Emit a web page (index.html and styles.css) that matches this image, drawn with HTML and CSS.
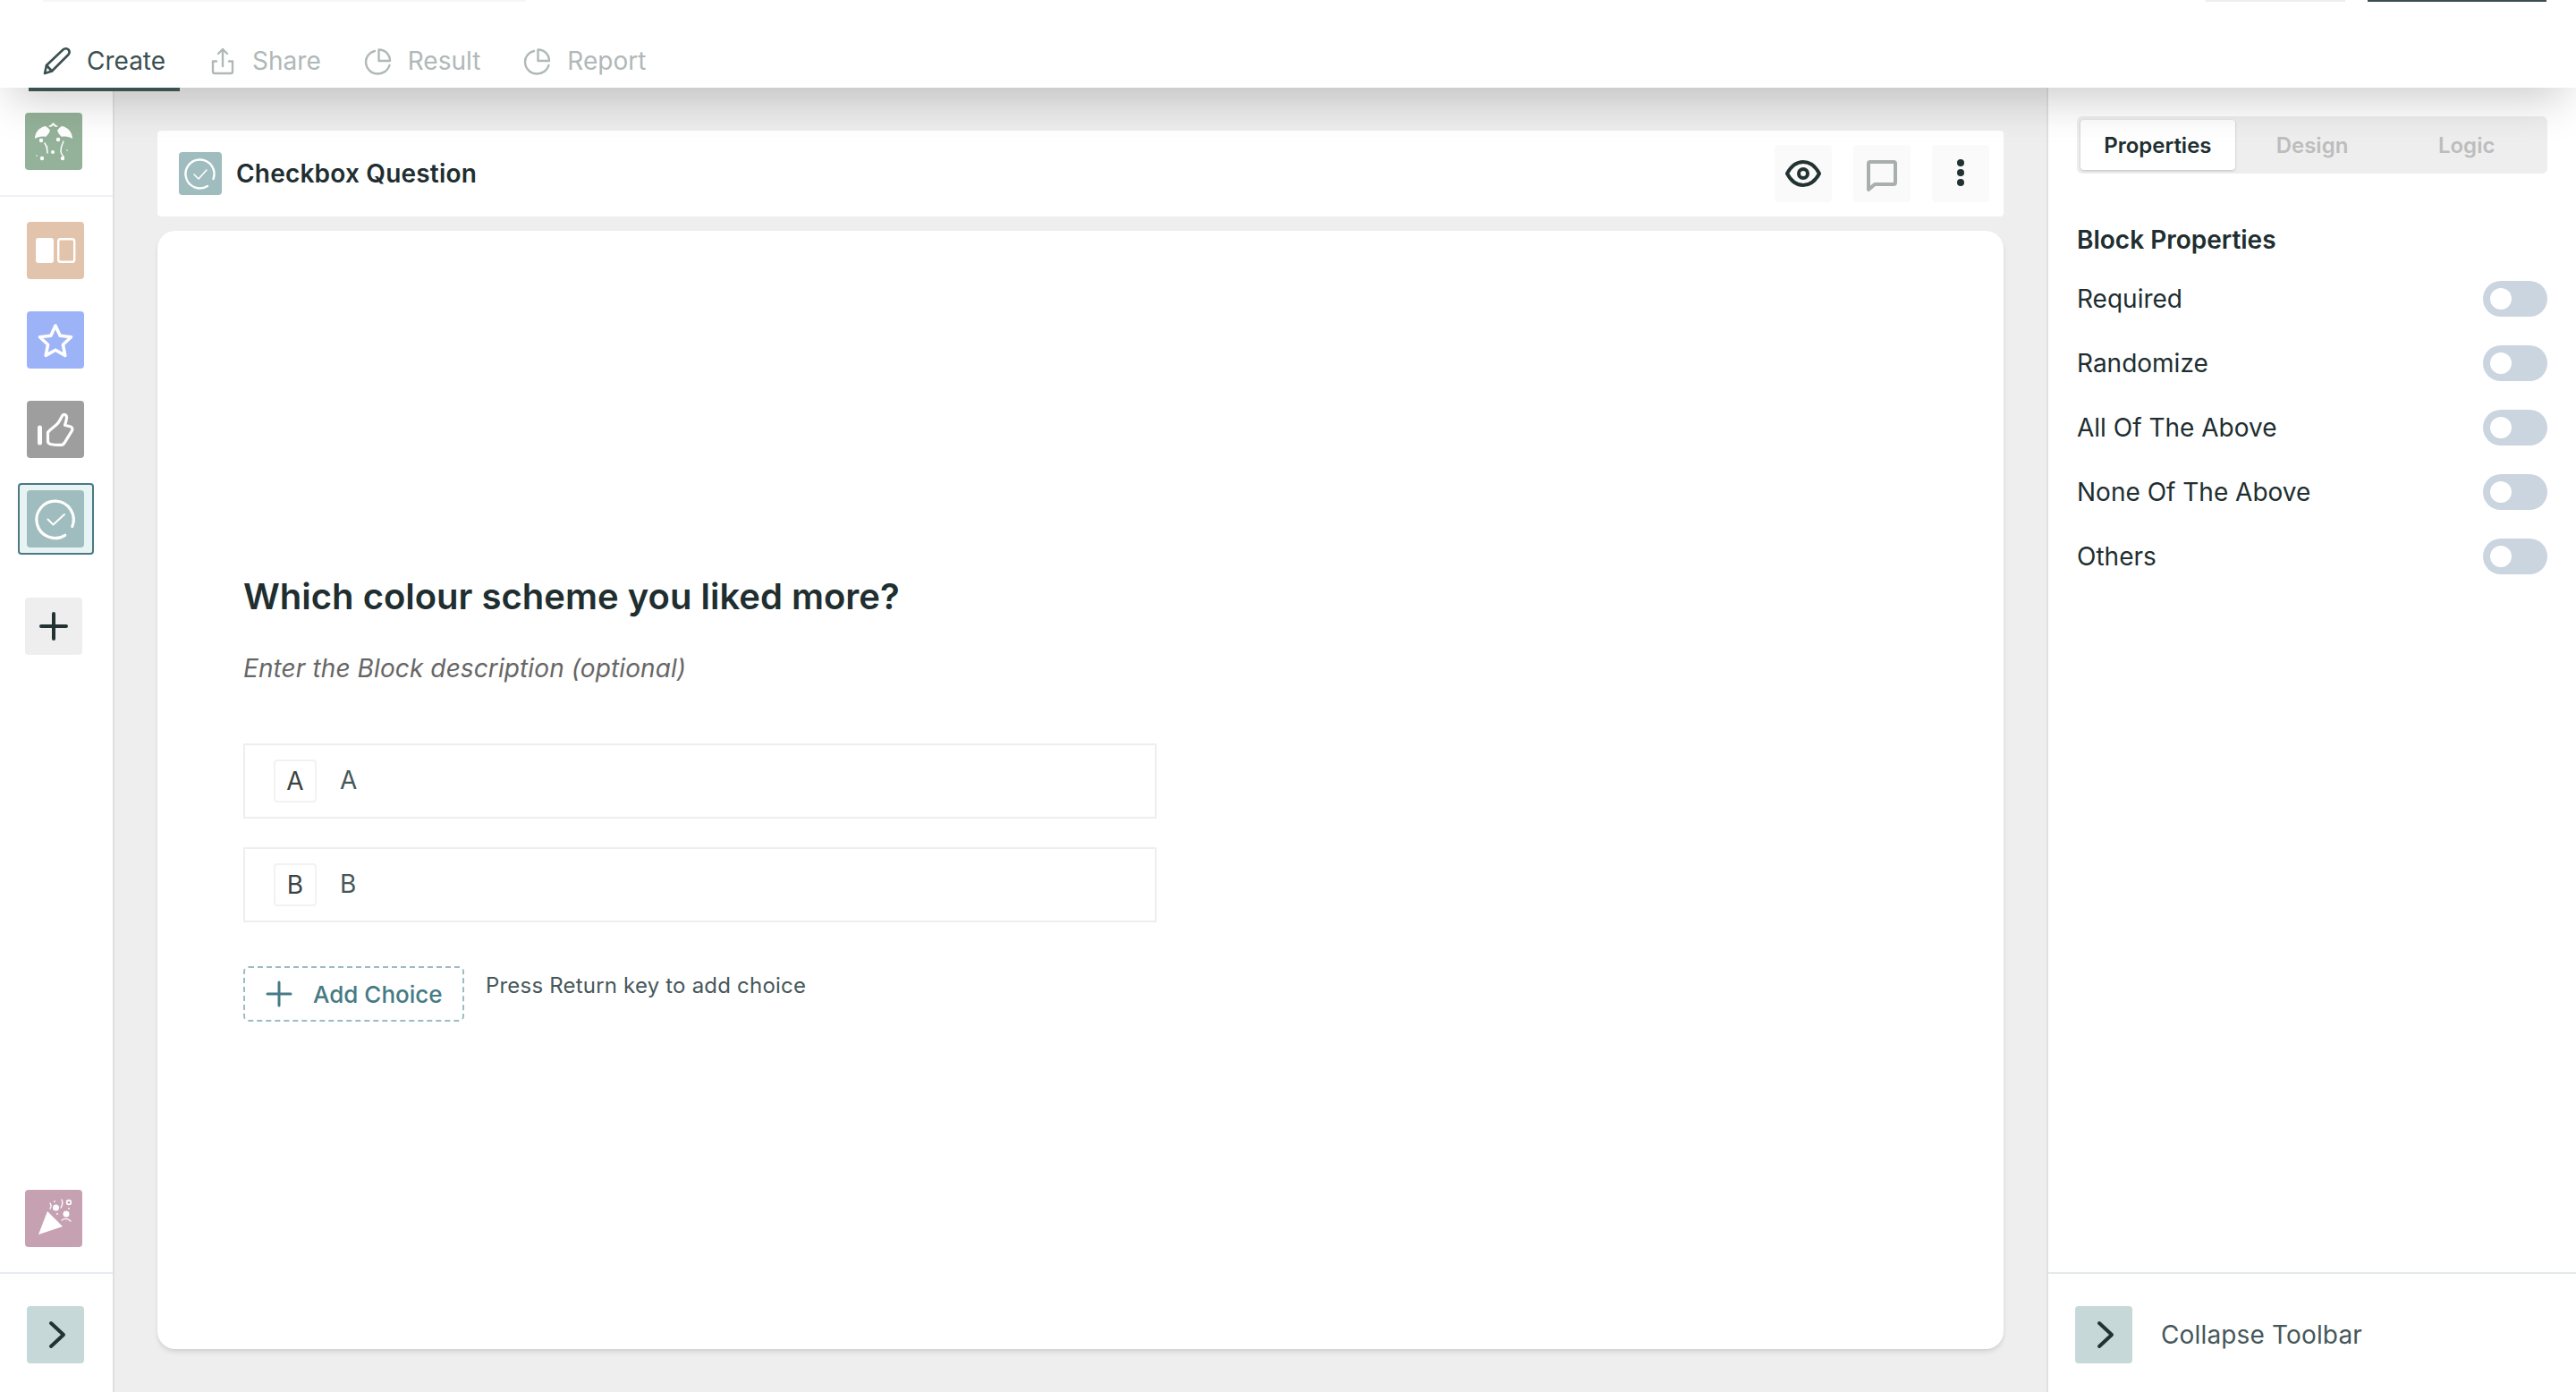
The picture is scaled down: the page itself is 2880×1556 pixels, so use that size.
FILE: index.html
```html
<!DOCTYPE html>
<html lang="en">
<head>
<meta charset="utf-8">
<title>Checkbox Question</title>
<link rel="stylesheet" href="styles.css">
</head>
<body>
<div class="app">
  <header class="topbar">
    <div class="topbar-clipped">
      <span class="clip clip-left"></span>
      <span class="clip-spacer"></span>
      <span class="clip clip-grey"></span>
      <span class="clip clip-dark"></span>
    </div>
    <nav class="nav">
      <a class="nav-tab nav-tab-active">
        <svg class="nav-icon" viewBox="0 0 32 32" fill="none" stroke="currentColor" stroke-width="2.600" stroke-linejoin="round" stroke-linecap="round"><path d="M2 30l2-9L22.500 3.500c2-1.800 4.500-1.500 6 0s1.500 3.500 0 5.500L10 27.500z"/><path d="M4 21l6 6.500"/></svg>
        <span>Create</span>
      </a>
      <a class="nav-tab">
        <svg class="nav-icon" viewBox="0 0 32 32" fill="none" stroke="currentColor" stroke-width="2.400" stroke-linecap="round" stroke-linejoin="round"><path d="M9 16.500H5V28a2 2 0 0 0 2 2h18a2 2 0 0 0 2-2V16.500h-4"/><path d="M16 22V3M11 8l5-5 5 5"/></svg>
        <span>Share</span>
      </a>
      <a class="nav-tab">
        <svg class="nav-icon" viewBox="0 0 32 32" fill="none" stroke="currentColor" stroke-width="2.400" stroke-linecap="round" stroke-linejoin="round"><path d="M12 5C6 6.500 2 11.500 2 17c0 7.500 6 13.500 13.500 13.500 6.500 0 11.500-4 13-9.500"/><path d="M16.500 3.500c7 0 12.500 5.500 12.500 12.500H16.500z"/></svg>
        <span>Result</span>
      </a>
      <a class="nav-tab">
        <svg class="nav-icon" viewBox="0 0 32 32" fill="none" stroke="currentColor" stroke-width="2.400" stroke-linecap="round" stroke-linejoin="round"><path d="M12 5C6 6.500 2 11.500 2 17c0 7.500 6 13.500 13.500 13.500 6.500 0 11.500-4 13-9.500"/><path d="M16.500 3.500c7 0 12.500 5.500 12.500 12.500H16.500z"/></svg>
        <span>Report</span>
      </a>
    </nav>
  </header>

  <div class="workspace">
    <aside class="sidebar">
      <div class="sidebar-logo">
        <div class="tile tile-logo tile-wide">
          <svg viewBox="0 0 64 64" fill="#fff"><path d="M26 15q3-1 5.500-4 2.500 3 5.500 4l-2 1q-2 0-3.500-2-1.500 2-3.500 2z"/><path d="M11 29c0-7 5-13 12-14 2 1 4 3 5 5-1 3-3 5-5 7-4-1-9 0-12 2z"/><path d="M53 29c0-7-5-13-12-14-2 1-4 3-5 5 1 3 3 5 5 7 4-1 9 0 12 2z"/><circle cx="18" cy="31" r="2.200"/><circle cx="37" cy="30" r="2.200"/><circle cx="31" cy="44" r="2"/><circle cx="19" cy="51" r="2.200"/><circle cx="42" cy="51" r="2.200"/><circle cx="13" cy="48" r=".8"/><circle cx="47" cy="42" r=".8"/><circle cx="25" cy="38" r=".7"/><path d="M22 34c2 3 3 7 3 11M43 32c-2 4-3 8-3 11 0 2 1 4 3 6" fill="none" stroke="#fff" stroke-width="1.500" stroke-linecap="round"/></svg>
        </div>
      </div>
      <div class="sidebar-list">
        <div class="tile tile-form">
          <svg viewBox="0 0 64 64"><rect x="10" y="18" width="20" height="28" rx="3" fill="#fff"/><rect x="35.200" y="19.200" width="18" height="25.600" rx="2.500" fill="none" stroke="#fff" stroke-width="2.400"/></svg>
        </div>
        <div class="tile tile-star">
          <svg viewBox="0 0 64 64"><path d="M32 16l5.200 11.300 12.300 1.500-9.100 8.400 2.400 12.200L32 43.300l-10.800 6.100 2.400-12.200-9.100-8.400 12.300-1.500z" fill="none" stroke="#fff" stroke-width="3.600" stroke-linejoin="round"/></svg>
        </div>
        <div class="tile tile-thumb">
          <svg viewBox="0 0 64 64" fill="none" stroke="#fff" stroke-linecap="round" stroke-linejoin="round"><path d="M14.500 30v17" stroke-width="5"/><path d="M23.500 35v10c0 2 1 3 3 3.500 4 .8 8 1 12 .8 2 0 3-1 4-3l8-13c1-2 0-4-2-4.500l-6-1.500c1-3 2-6 2-9 0-2-2-3.500-4-2.500-1.500 1-2 3-3 5-1.500 3-3 5-5.500 7-3 2.500-6 4-8.500 7.700z" stroke-width="3.200"/></svg>
        </div>
        <div class="tile-selected">
          <div class="tile tile-check">
            <svg viewBox="0 0 64 64" fill="none" stroke="#fff" stroke-linecap="round" stroke-linejoin="round"><path d="M42.700 50.300A20.700 20.700 0 1 1 50.800 40.500" stroke-width="3.200"/><path d="M23.500 32.500l6 6L42 27" stroke-width="2"/></svg>
          </div>
        </div>
        <div class="tile tile-add tile-wide">
          <svg viewBox="0 0 64 64" fill="none" stroke="#233233" stroke-width="4" stroke-linecap="round"><path d="M32 18v28M18 32h28"/></svg>
        </div>
        <div class="tile tile-party tile-wide tile-end">
          <svg viewBox="0 0 64 64" fill="#fff"><path d="M15 50l10-26 17 17z"/><circle cx="34.500" cy="20" r="3.500"/><circle cx="46" cy="27" r="3.500"/><circle cx="49" cy="14" r="2.400" fill="none" stroke="#fff" stroke-width="1.600"/><circle cx="33" cy="13" r=".9"/><circle cx="36" cy="27" r=".9"/><circle cx="49" cy="21" r=".9"/><path d="M28 15c1.500 2 1.500 4 0 6M41 11c1.500 3 1 6-1 9M41 34c3-2 7-2 10 1" fill="none" stroke="#fff" stroke-width="1.300" stroke-linecap="round"/></svg>
        </div>
      </div>
      <div class="sidebar-footer">
        <div class="tile tile-toggle">
          <svg viewBox="0 0 64 64" fill="none" stroke="#233233" stroke-width="4" stroke-linecap="round" stroke-linejoin="round"><path d="M27 19l14 13-14 13"/></svg>
        </div>
      </div>
    </aside>

    <main class="main">
      <div class="block-header">
        <div class="block-title">
          <span class="block-badge">
            <svg viewBox="0 0 48 64" fill="none" stroke="#fff" stroke-linecap="round" stroke-linejoin="round"><path d="M32 46A16 16 0 1 1 38.500 38" stroke-width="2.400"/><path d="M17 33l5 5 9-10" stroke-width="1.600"/></svg>
          </span>
          <h1>Checkbox Question</h1>
        </div>
        <div class="block-actions">
          <button class="action">
            <svg viewBox="0 0 64 64" fill="none" stroke="#233233" stroke-width="4" stroke-linejoin="round"><path d="M14 32c4.500-8.500 11-13 18-13s13.500 4.500 18 13c-4.500 8.500-11 13-18 13s-13.500-4.500-18-13z"/><circle cx="32" cy="32" r="5"/></svg>
          </button>
          <button class="action">
            <svg viewBox="0 0 64 64" fill="none" stroke="#a9afaf" stroke-width="4" stroke-linejoin="round"><path d="M19 19h26a2 2 0 0 1 2 2v21a2 2 0 0 1-2 2H24l-7 6V21a2 2 0 0 1 2-2z"/></svg>
          </button>
          <button class="action">
            <svg viewBox="0 0 64 64" fill="#233233"><circle cx="32" cy="20" r="4"/><circle cx="32" cy="31" r="4"/><circle cx="32" cy="42" r="4"/></svg>
          </button>
        </div>
      </div>

      <section class="card">
        <h2 class="question">Which colour scheme you liked more?</h2>
        <p class="description">Enter the Block description (optional)</p>
        <ul class="choices">
          <li class="choice"><span class="choice-key">A</span><span class="choice-text">A</span></li>
          <li class="choice"><span class="choice-key">B</span><span class="choice-text">B</span></li>
        </ul>
        <div class="add-row">
          <button class="add-choice">
            <svg viewBox="0 0 28 28" fill="none" stroke="#467a85" stroke-width="3" stroke-linecap="round"><path d="M14 1v26M1 14h26"/></svg>
            <span>Add Choice</span>
          </button>
          <span class="add-hint">Press Return key to add choice</span>
        </div>
      </section>
    </main>

    <aside class="panel">
      <div class="panel-body">
        <div class="seg">
          <span class="seg-tab seg-tab-active">Properties</span>
          <span class="seg-tab">Design</span>
          <span class="seg-tab">Logic</span>
        </div>
        <h3 class="panel-title">Block Properties</h3>
        <ul class="props">
          <li class="prop"><span>Required</span><span class="switch"></span></li>
          <li class="prop"><span>Randomize</span><span class="switch"></span></li>
          <li class="prop"><span>All Of The Above</span><span class="switch"></span></li>
          <li class="prop"><span>None Of The Above</span><span class="switch"></span></li>
          <li class="prop"><span>Others</span><span class="switch"></span></li>
        </ul>
      </div>
      <div class="panel-footer">
        <div class="tile tile-toggle">
          <svg viewBox="0 0 64 64" fill="none" stroke="#233233" stroke-width="4" stroke-linecap="round" stroke-linejoin="round"><path d="M27 19l14 13-14 13"/></svg>
        </div>
        <span class="collapse-label">Collapse Toolbar</span>
      </div>
    </aside>
  </div>
</div>
</body>
</html>
```
FILE: styles.css
```css
* { box-sizing: border-box; }
html, body { margin: 0; height: 100%; }
body {
  font-family: Inter, "Noto Sans", "Liberation Sans", sans-serif;
  color: #202e30;
  background: #eee;
  overflow: hidden;
}
h1, h2, h3, p, ul { margin: 0; padding: 0; }
ul { list-style: none; }
button { font: inherit; border: 0; padding: 0; background: none; }

.app { display: flex; flex-direction: column; height: 1556px; }

.topbar {
  position: relative;
  z-index: 2;
  height: 98px;
  background: #fff;
  display: flex;
  flex-direction: column;
  box-shadow: 0 25px 50px -12px rgba(0,0,0,.2);
}
.topbar-clipped { display: flex; height: 2px; padding-left: 48px; }
.clip { display: block; height: 2px; }
.clip-left { width: 540px; background: #f6f6f6; }
.clip-spacer { flex: 1; }
.clip-grey { width: 156px; background: #eee; margin-right: 25px; }
.clip-dark { width: 200px; background: #3b4f50; margin-right: 33px; }

.nav { display: flex; gap: 16px; padding: 42px 0 0 32px; height: 96px; }
.nav-tab {
  display: flex;
  align-items: center;
  gap: 17px;
  height: 54px;
  padding: 0 16px 6px;
  font-size: 28px;
  color: #b0b8b8;
  position: relative;
}
.nav-tab-active { color: #3b5051; }
.nav-tab-active::after {
  content: "";
  position: absolute;
  left: 0; right: 0; bottom: -4px;
  height: 4px;
  background: #3b5051;
}
.nav-icon { width: 32px; height: 32px; flex: none; overflow: visible; }

.workspace { flex: 1; display: flex; min-height: 0; }

.tile { display: block; width: 64px; height: 64px; border-radius: 4px; flex: none; }
.tile svg { display: block; width: 64px; height: 64px; }
.tile-logo { background: #94b199; }
.tile-form { background: #e2c4ac; }
.tile-star { background: #9db3f7; }
.tile-thumb { background: #9e9e9e; }
.tile-check { background: #9fbcbe; }
.tile-add { background: #eee; }
.tile-party { background: #c6a1b2; }
.tile-toggle { background: #c6d8d8; }
.tile-wide { margin-left: -2px; }

.sidebar {
  width: 128px;
  flex: none;
  background: #fff;
  border-right: 2px solid #e0e0e0;
  display: flex;
  flex-direction: column;
}
.sidebar-logo { padding: 28px 0; padding-left: 28px; height: 122px; border-bottom: 2px solid #eef2f6; }
.sidebar-logo .tile-wide { margin-left: 0; }
.sidebar-list {
  flex: 1;
  display: flex;
  flex-direction: column;
  gap: 36px;
  padding: 28px 0 28px 30px;
}
.tile-selected {
  flex: none;
  width: 85px;
  margin: -8px 0 -8px -10px;
  padding: 6px 9px 6px 8px;
  border: 2px solid #4a7985;
  border-radius: 4px;
  background: #e8f3f4;
}
.tile-add { margin-top: 20px; }
.tile-end { margin-top: auto; }
.sidebar-footer { height: 134px; padding: 36px 0 0 30px; border-top: 2px solid #e6ebf3; }

.main {
  flex: 1;
  min-width: 0;
  padding: 48px;
  display: flex;
  flex-direction: column;
  gap: 16px;
  background: #eee;
}
.block-header {
  height: 96px;
  flex: none;
  background: #fff;
  border-radius: 4px;
  display: flex;
  align-items: center;
  justify-content: space-between;
  padding: 0 16px 0 24px;
}
.block-title { display: flex; align-items: center; gap: 16px; }
.block-title h1 { font-size: 28px; font-weight: 600; line-height: 48px; color: #202e30; letter-spacing: .2px; }
.block-badge { display: block; width: 48px; height: 48px; background: #9fbcbe; border-radius: 4px; }
.block-badge svg { display: block; width: 48px; height: 64px; margin-top: -8px; }
.block-actions { display: flex; gap: 24px; }
.action { display: block; width: 64px; height: 64px; background: #fafafa; border-radius: 4px; }
.action svg { display: block; width: 64px; height: 64px; }

.card {
  flex: 1;
  background: #fff;
  border-radius: 20px;
  box-shadow: 0 4px 6px -1px rgba(0,0,0,.1), 0 2px 4px -1px rgba(0,0,0,.06);
  padding: 385px 96px 0;
}
.question { font-size: 40px; line-height: 48px; font-weight: 600; color: #202e30; }
.description { margin-top: 36px; font-size: 28px; line-height: 40px; font-style: italic; color: #666; letter-spacing: .1px; }
.choices { margin-top: 64px; display: flex; flex-direction: column; gap: 32px; width: 1021px; }
.choice {
  height: 84px;
  border: 2px solid #eee;
  display: flex;
  align-items: center;
  padding-left: 32px;
  gap: 26px;
  font-size: 28px;
}
.choice-key {
  width: 48px;
  height: 48px;
  border: 2px solid #f2f2f2;
  border-radius: 4px;
  display: flex;
  align-items: center;
  justify-content: center;
  color: #3a4344;
}
.choice-text { color: #46575a; position: relative; top: -1px; }
.add-row { display: flex; align-items: flex-start; gap: 24px; margin-top: 49px; }
.add-choice {
  width: 247px;
  height: 62px;
  border: 2px dashed #9dbcbf;
  border-radius: 6px;
  display: flex;
  align-items: center;
  gap: 24px;
  padding-left: 24px;
  font-size: 26px;
  font-weight: 500;
  color: #467a85;
}
.add-choice svg { width: 28px; height: 28px; flex: none; overflow: visible; }
.add-hint { font-size: 24px; line-height: 44px; color: #46575a; letter-spacing: .2px; }

.panel {
  width: 592px;
  flex: none;
  background: #fff;
  border-left: 2px solid #e0e0e0;
  display: flex;
  flex-direction: column;
}
.panel-body { flex: 1; padding: 32px 32px 0; }
.seg {
  display: flex;
  height: 64px;
  padding: 4px;
  background: #eee;
  border-radius: 6px;
}
.seg-tab {
  flex: 1;
  display: flex;
  align-items: center;
  justify-content: center;
  font-size: 24px;
  font-weight: 600;
  color: #bdbdbd;
  border-radius: 4px;
}
.seg-tab-active { background: #fff; color: #202e30; box-shadow: 0 1px 3px rgba(0,0,0,.2); }
.panel-title { margin-top: 56px; font-size: 28px; line-height: 36px; font-weight: 600; color: #202e30; }
.props { margin-top: 12px; }
.prop {
  height: 72px;
  display: flex;
  align-items: center;
  justify-content: space-between;
  font-size: 28px;
  color: #202e30;
}
.switch {
  width: 72px;
  height: 40px;
  border-radius: 20px;
  background: #cbd5e0;
  display: block;
  position: relative;
}
.switch::after {
  content: "";
  position: absolute;
  left: 8px; top: 8px;
  width: 24px; height: 24px;
  border-radius: 50%;
  background: #fff;
}
.panel-footer {
  height: 134px;
  flex: none;
  border-top: 2px solid #e4e9ec;
  display: flex;
  align-items: flex-start;
  gap: 32px;
  padding: 36px 0 0 30px;
}
.collapse-label { font-size: 28px; line-height: 64px; color: #46575a; letter-spacing: .15px; }
```
